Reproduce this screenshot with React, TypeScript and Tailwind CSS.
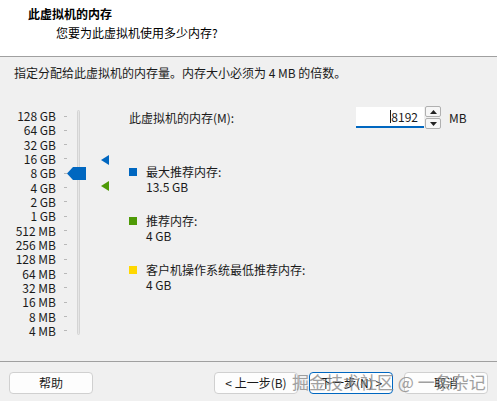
import React from "react";

const FONT = '"Microsoft YaHei UI", "Noto Sans CJK SC", "Noto Sans", sans-serif';

const SCALE = [
  "128 GB", "64 GB", "32 GB", "16 GB", "8 GB", "4 GB", "2 GB", "1 GB",
  "512 MB", "256 MB", "128 MB", "64 MB", "32 MB", "16 MB", "8 MB", "4 MB",
];

function LeftArrow({ color }: { color: string }) {
  return (
    <svg width="8" height="10" viewBox="0 0 8 10">
      <polygon points="0,5 8,0 8,10" fill={color} />
    </svg>
  );
}

function MemorySlider() {
  return (
    <div className="flex h-[229px]">
      <div className="flex w-[56px] flex-col justify-between text-right text-[12px] leading-[14px] text-[#1a1a1a]">
        {SCALE.map((s) => (
          <div key={s}>{s}</div>
        ))}
      </div>
      <div className="ml-[8px] flex w-[3px] flex-col justify-between">
        {SCALE.map((s) => (
          <div key={s} className="flex h-[14px] items-center">
            <div className="h-px w-[3px] bg-[#b8b8b8]" />
          </div>
        ))}
      </div>
      <div className="relative ml-[10px] w-[30px]">
        <div className="absolute left-0 top-[1px] bottom-[3px] w-[3px] rounded-sm border border-[#d4d4d4] bg-[#e6e6e6]" />
        {/* thumb sitting on 8 GB */}
        <svg className="absolute left-[-10px] top-[58px]" width="19" height="13" viewBox="0 0 19 13">
          <polygon points="0,6.5 6,0 19,0 19,13 6,13" fill="#0067c0" />
        </svg>
        <div className="absolute left-[24px] top-[46px] flex">
          <LeftArrow color="#0067c0" />
        </div>
        <div className="absolute left-[24px] top-[72px] flex">
          <LeftArrow color="#4e9a06" />
        </div>
      </div>
    </div>
  );
}

function Legend({ color, label, value }: { color: string; label: string; value: string }) {
  return (
    <div className="flex">
      <div className="mt-[4px] h-[8px] w-[8px]" style={{ backgroundColor: color }} />
      <div className="ml-[9px] flex flex-col text-[12px] leading-[15px] text-[#1a1a1a]">
        <span>{label}</span>
        <span>{value}</span>
      </div>
    </div>
  );
}

function SpinBox() {
  return (
    <div className="flex items-center">
      <div className="flex h-[21px] w-[68px] items-center justify-end border-b-2 border-[#0067c0] bg-white pr-[6px] text-[12px] text-[#1a1a1a]">
        <span className="h-[13px] w-px bg-[#1a1a1a]" />
        <span>8192</span>
      </div>
      <div className="ml-px flex h-[23px] w-[16px] flex-col gap-px">
        <div className="flex flex-1 items-center justify-center rounded-[2px] border border-[#b0b0b0] bg-[#f6f6f6]">
          <svg width="7" height="4" viewBox="0 0 7 4"><polygon points="3.5,0 7,4 0,4" fill="#222" /></svg>
        </div>
        <div className="flex flex-1 items-center justify-center rounded-[2px] border border-[#b0b0b0] bg-[#f6f6f6]">
          <svg width="7" height="4" viewBox="0 0 7 4"><polygon points="0,0 7,0 3.5,4" fill="#222" /></svg>
        </div>
      </div>
      <span className="ml-[8px] text-[12px] text-[#1a1a1a]">MB</span>
    </div>
  );
}

function Button({ children, focused }: { children: React.ReactNode; focused?: boolean }) {
  return (
    <div
      className={
        "flex h-[22px] w-[84px] items-center justify-center rounded-[4px] bg-[#fdfdfd] text-[12px] text-[#1a1a1a] " +
        (focused ? "border-[1.5px] border-[#0067c0]" : "border border-[#d0d0d0]")
      }
    >
      {children}
    </div>
  );
}

export default function App() {
  return (
    <div className="relative flex h-[401px] w-[497px] flex-col overflow-hidden bg-[#f0f0f0]" style={{ fontFamily: FONT }}>
      <div className="flex h-[57px] flex-col border-b border-[#a0a0a0] bg-white pt-[6px]">
        <div className="pl-[28px] text-[12px] font-bold leading-[16px] text-black">此虚拟机的内存</div>
        <div className="mt-[3px] pl-[56px] text-[12px] leading-[16px] text-black">您要为此虚拟机使用多少内存?</div>
      </div>

      <div className="mt-[8px] pl-[14px] text-[12px] leading-[16px] text-[#1a1a1a]">
        指定分配给此虚拟机的内存量。内存大小必须为 4 MB 的倍数。
      </div>

      <div className="mt-[28px] flex">
        <MemorySlider />
        <div className="ml-[22px] flex flex-1 flex-col">
          <div className="mt-[-3px] flex items-center">
            <span className="w-[227px] text-[12px] text-[#1a1a1a]">此虚拟机的内存(M):</span>
            <SpinBox />
          </div>
          <div className="mt-[35px] flex flex-col gap-[19px]">
            <Legend color="#0067c0" label="最大推荐内存:" value="13.5 GB" />
            <Legend color="#4e9a06" label="推荐内存:" value="4 GB" />
            <Legend color="#ffd800" label="客户机操作系统最低推荐内存:" value="4 GB" />
          </div>
        </div>
      </div>

      <div className="mt-auto border-t border-[#a0a0a0] px-[9px] pb-[7px] pt-[10px]">
        <div className="flex items-center">
          <Button>帮助</Button>
          <div className="ml-auto flex gap-[11px]">
            <Button>&lt; 上一步(B)</Button>
            <Button focused>下一步(N) &gt;</Button>
            <Button>取消</Button>
          </div>
        </div>
      </div>

      {/* site watermark laid over the button row */}
      <div className="pointer-events-none absolute left-[292px] top-[370px] text-[17px] leading-[24px] text-[#8a8a8a] opacity-80">
        掘金技术社区 @ 一条杂记
      </div>
    </div>
  );
}
